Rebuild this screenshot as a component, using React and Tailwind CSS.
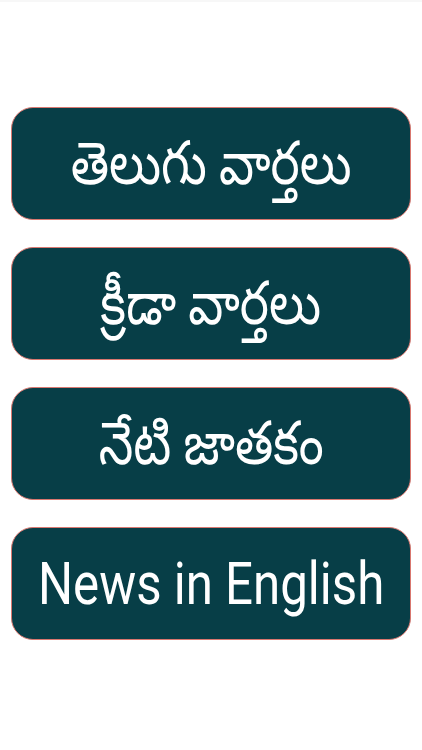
export default function App() {
  const items = ["తెలుగు వార్తలు", "క్రీడా వార్తలు", "నేటి జాతకం", "News in English"];
  return (
    <div className="w-[422px] h-[750px] bg-white flex flex-col" style={{ fontFamily: "Roboto, 'Noto Sans', 'Noto Sans Telugu', sans-serif" }}>
      <div className="h-[2px] bg-[#f7f7f7]" />
      <div className="flex flex-col gap-[27px] px-[11px] pt-[105px]">
        {items.map((t) => (
          <div key={t} className="h-[113px] rounded-[22px] bg-[#073e47] border border-[#d9776f] flex items-center justify-center overflow-hidden">
            <span className="inline-block whitespace-nowrap text-white text-[60px] leading-none scale-x-[0.82]">{t}</span>
          </div>
        ))}
      </div>
    </div>
  );
}
